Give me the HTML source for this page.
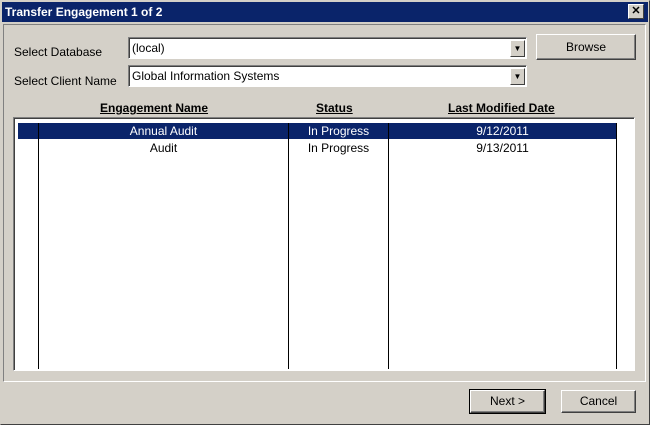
<html><head><style>
body{margin:0;width:650px;height:425px;background:#d4d0c8;font-family:"Liberation Sans",sans-serif;font-size:12px;position:relative;overflow:hidden}
.a{position:absolute}
.win{left:0;top:0;width:648px;height:423px;border:1px solid #404040;border-top-color:#d4d0c8;border-left-color:#d4d0c8}
.title{left:2px;top:2px;width:646px;height:20px;background:#0a246a;color:#fff;font-weight:bold;line-height:20px}
.combo{background:#fff;border:1px solid;border-color:#808080 #fff #fff #808080;box-shadow:inset 1px 1px 0 #404040}
.dd{background:#d4d0c8;border:1px solid;border-color:#fff #404040 #404040 #fff;width:13px;height:15px}
.btn{background:#d4d0c8;border:1px solid;border-color:#fff #404040 #404040 #fff;text-align:center;box-shadow:inset -1px -1px 0 #808080}
.v{width:1px;background:#000;top:123px;height:246px}
</style></head><body>
<div class="a win"></div>
<div class="a title"><span style="margin-left:3px">Transfer Engagement 1 of 2</span></div>
<div class="a btn" style="left:628px;top:4px;width:14px;height:13px;line-height:13px;font-size:11px;font-weight:bold;box-shadow:none">✕</div>
<div class="a" style="left:3px;top:24px;width:641px;height:356px;border:1px solid;border-color:#808080 #fff #fff #808080"></div>
<div class="a" style="left:14px;top:45px">Select Database</div>
<div class="a" style="left:14px;top:74px">Select Client Name</div>
<div class="a combo" style="left:128px;top:37px;width:397px;height:20px"><span class="a" style="left:3px;top:3px">(local)</span><div class="a dd" style="left:381px;top:2px;font-size:8px;text-align:center;line-height:15px">▼</div></div>
<div class="a combo" style="left:128px;top:65px;width:397px;height:20px"><span class="a" style="left:3px;top:3px">Global Information Systems</span><div class="a dd" style="left:381px;top:2px;font-size:8px;text-align:center;line-height:15px">▼</div></div>
<div class="a btn" style="left:536px;top:34px;width:98px;height:24px;line-height:24px">Browse</div>
<div class="a" style="left:100px;top:101px;font-weight:bold;text-decoration:underline">Engagement Name</div>
<div class="a" style="left:316px;top:101px;font-weight:bold;text-decoration:underline">Status</div>
<div class="a" style="left:448px;top:101px;font-weight:bold;text-decoration:underline">Last Modified Date</div>
<div class="a" style="left:13px;top:117px;width:620px;height:252px;background:#fff;border:1px solid;border-color:#808080 #fff #fff #808080;box-shadow:inset 1px 1px 0 #404040"></div>
<div class="a" style="left:18px;top:123px;width:598px;height:16px;background:#0a246a"></div>
<div class="a v" style="left:38px"></div><div class="a v" style="left:288px"></div><div class="a v" style="left:388px"></div><div class="a v" style="left:616px"></div>
<div class="a" style="left:39px;top:124px;width:249px;text-align:center;color:#fff">Annual Audit</div>
<div class="a" style="left:289px;top:124px;width:99px;text-align:center;color:#fff">In Progress</div>
<div class="a" style="left:389px;top:124px;width:227px;text-align:center;color:#fff">9/12/2011</div>
<div class="a" style="left:39px;top:141px;width:249px;text-align:center">Audit</div>
<div class="a" style="left:289px;top:141px;width:99px;text-align:center">In Progress</div>
<div class="a" style="left:389px;top:141px;width:227px;text-align:center">9/13/2011</div>
<div class="a btn" style="left:470px;top:390px;width:73px;height:21px;line-height:21px;outline:1px solid #000">Next &gt;</div>
<div class="a btn" style="left:561px;top:390px;width:73px;height:21px;line-height:21px">Cancel</div>
</body></html>
